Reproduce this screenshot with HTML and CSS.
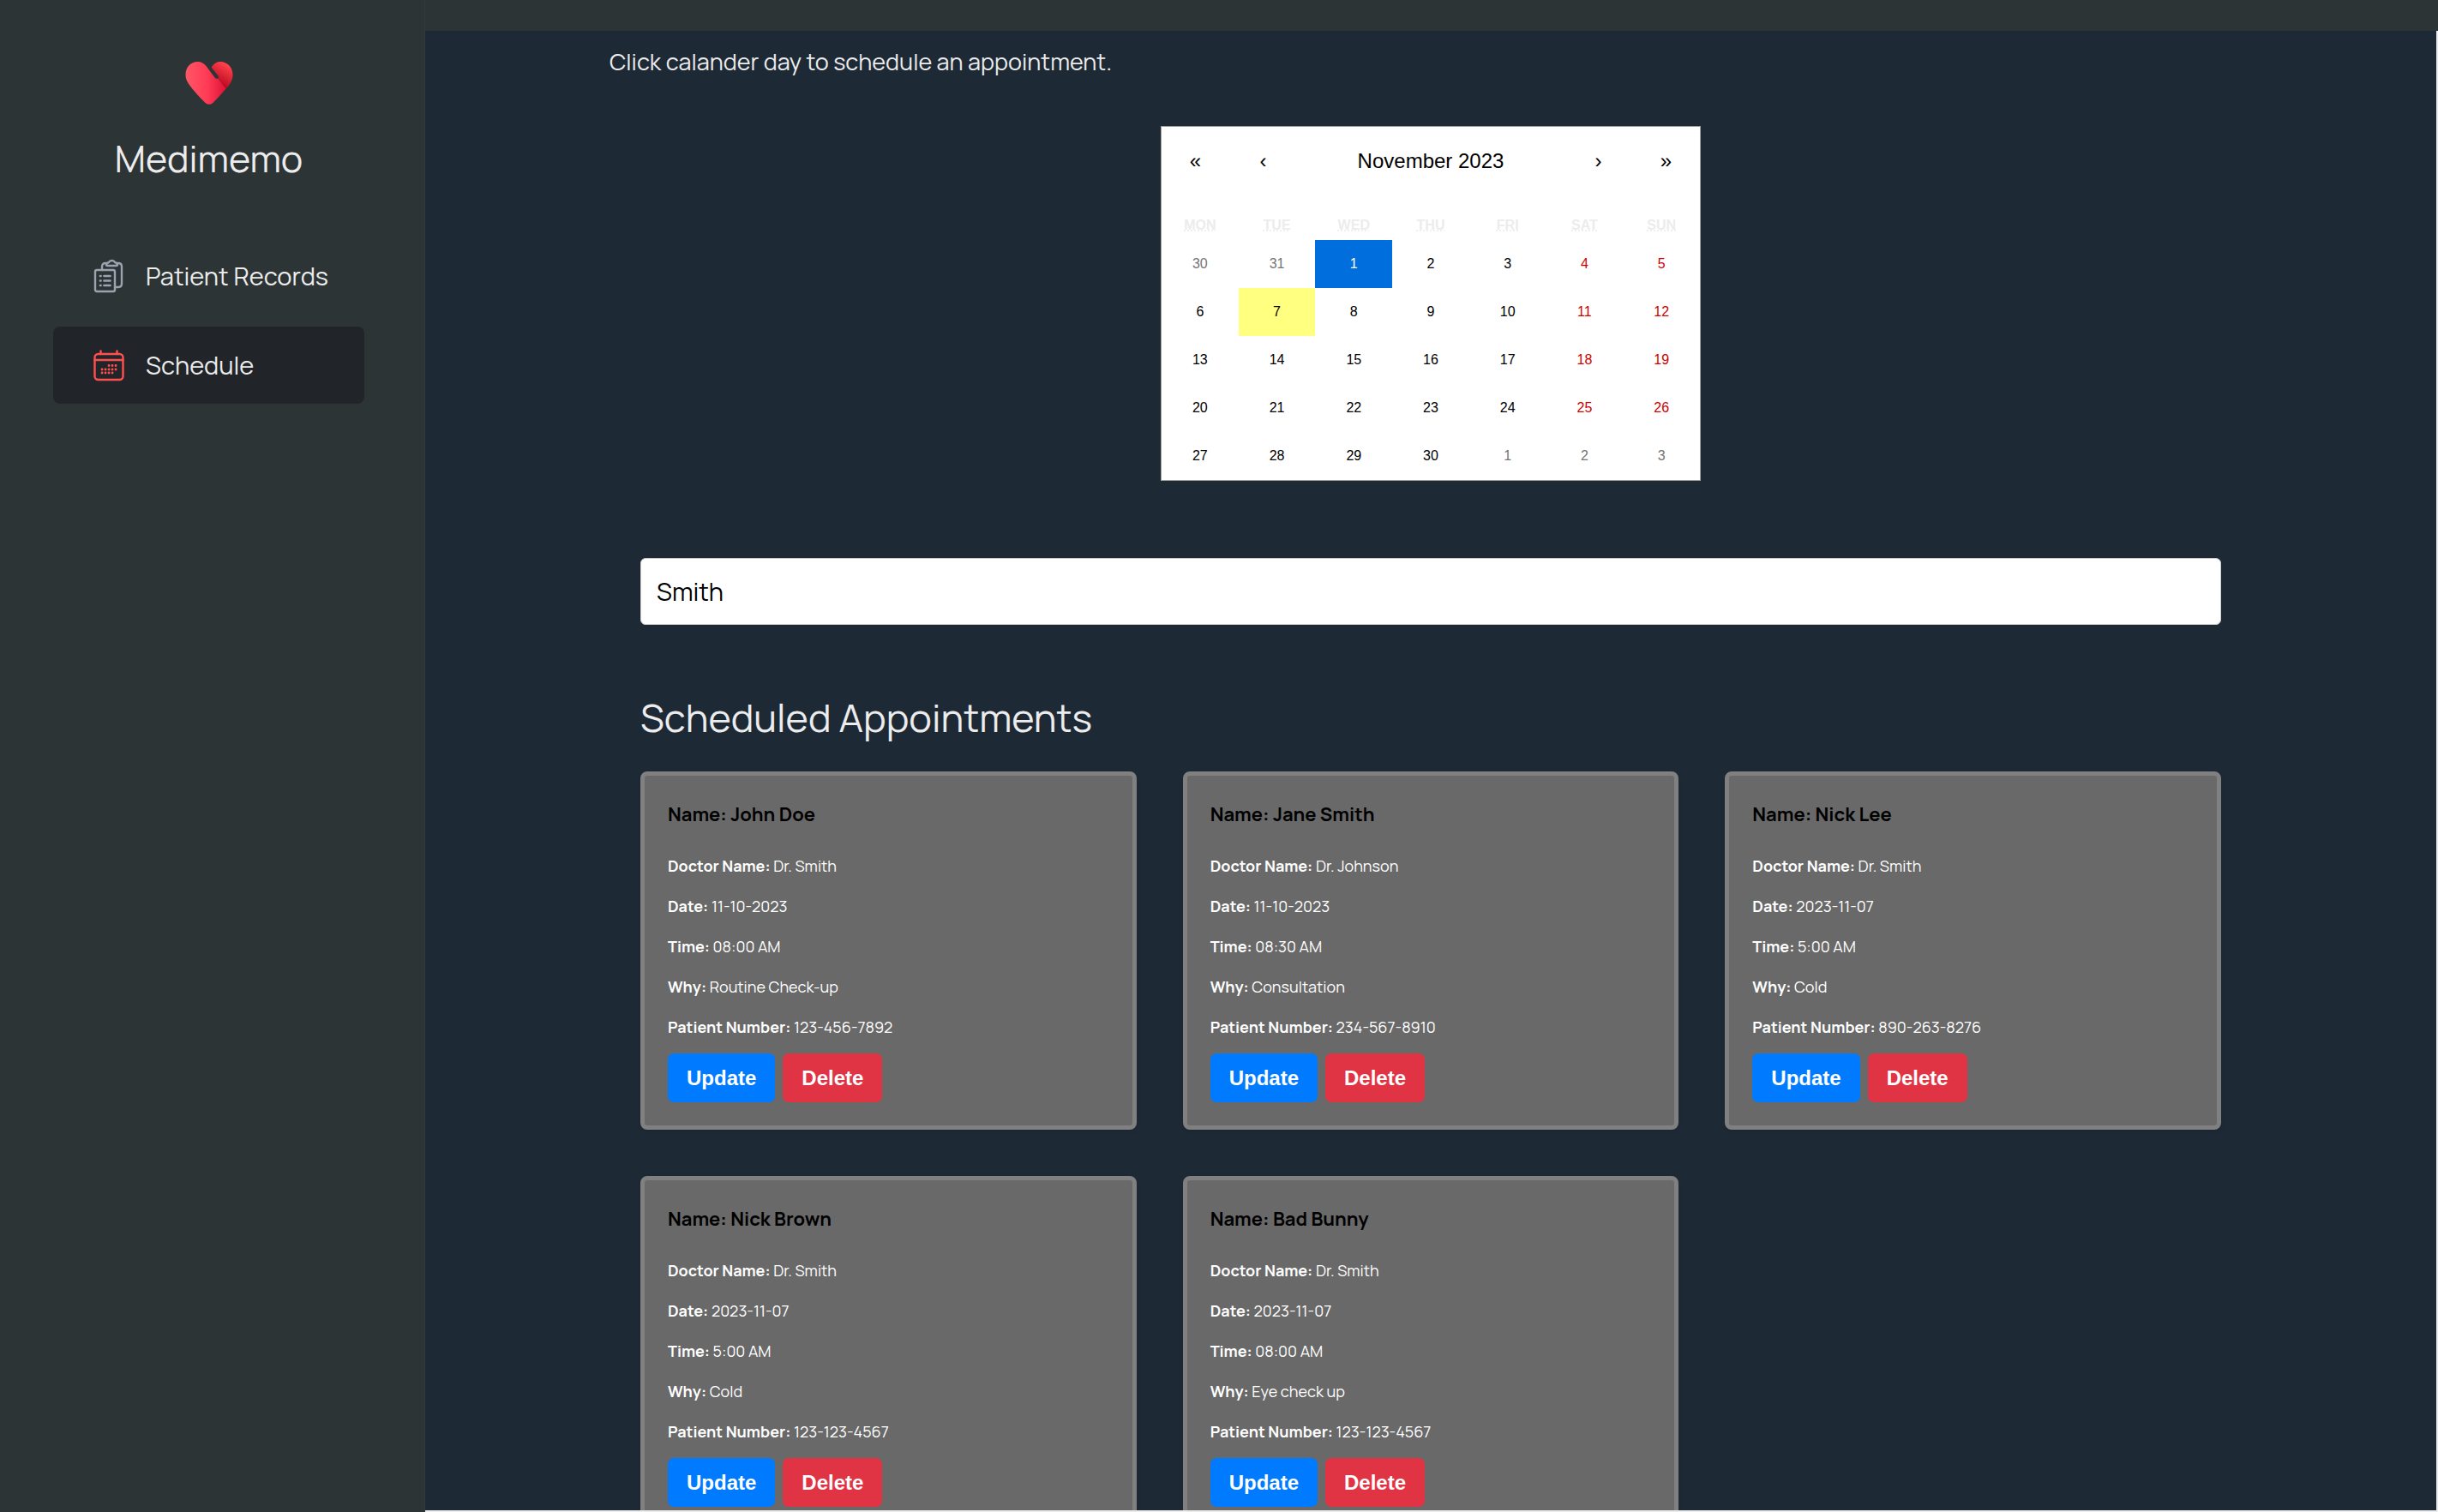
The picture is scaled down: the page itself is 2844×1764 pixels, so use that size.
FILE: index.html
```html
<!DOCTYPE html>
<html lang="en">
<head>
<meta charset="utf-8">
<title>Medimemo</title>
<meta name="viewport" content="width=device-width, initial-scale=1">
<link rel="stylesheet" href="styles.css">
</head>
<body>
<div class="app">
  <aside class="sidebar">
    <svg class="logo" viewBox="0 0 56 52" aria-hidden="true">
      <defs>
        <linearGradient id="heart-front" x1="0" y1="0" x2="1" y2="0">
          <stop offset="0" stop-color="#ff5668"/>
          <stop offset="0.55" stop-color="#ff3a54"/>
          <stop offset="1" stop-color="#dc1437"/>
        </linearGradient>
        <linearGradient id="heart-back" x1="0.7" y1="0.1" x2="0.35" y2="0.85">
          <stop offset="0" stop-color="#ff414b"/>
          <stop offset="1" stop-color="#b5061f"/>
        </linearGradient>
      </defs>
      <path fill="url(#heart-back)" d="M30.500 7.500C33.500 3 37.500 1 41 1C49 1 55.500 7.500 55.500 16C55.500 22.500 52 28 47.500 33L36 21C38 21.500 40 19.500 38.500 17.500Z"/>
      <path fill="url(#heart-front)" d="M14.500 1C19 1 22 3 24.500 6L34.500 19.500C35.500 21 37 21 38 20.500L47.500 32.500C42.500 38.500 37 44.500 33 48.500C30 51.500 26 51.500 23 48.500C16 41.500 9 34 4.500 27.500C2 24 0.500 20.500 0.500 16C0.500 7.500 6.500 1 14.500 1Z"/>
    </svg>
    <h1 class="brand">Medimemo</h1>
    <nav class="menu">
      <a class="menu-item" href="#records">
        <svg class="menu-icon" viewBox="0 0 36 40" fill="none" stroke="#9ca3af" stroke-width="2.400" stroke-linecap="round" stroke-linejoin="round" aria-hidden="true">
          <rect x="2" y="13" width="23" height="25" rx="2"/>
          <path d="M10 13V9Q10 5 14 5H15M28 5H29Q33 5 33 9V29Q33 33 29 33H25"/>
          <path d="M15 7Q15 5 18 4Q19 2 21.500 2Q24 2 25 4Q28 5 28 7Q28 8 26 8H17Q15 8 15 7Z"/>
          <path d="M8 20H8.500M12.500 20H19.500M8 25.500H8.500M12.500 25.500H19.500M8 31H8.500M12.500 31H19.500" stroke-width="2.700"/>
        </svg>
        Patient Records
      </a>
      <a class="menu-item active" href="#schedule">
        <svg class="menu-icon" viewBox="0 0 36 40" fill="none" stroke="#ff5050" stroke-width="2.400" stroke-linecap="round" aria-hidden="true">
          <rect x="1.500" y="7" width="33" height="30" rx="4"/>
          <path d="M1.500 14H34.500M8.500 3.500V7M27.500 3.500V7"/>
          <path d="M18 20.500H18.100M22 20.500H22.100M26 20.500H26.100M10 25H10.100M14 25H14.100M18 25H18.100M22 25H22.100M26 25H26.100M10 29H10.100M14 29H14.100M18 29H18.100M22 29H22.100" stroke-width="2.800"/>
        </svg>
        Schedule
      </a>
    </nav>
  </aside>

  <main class="main">
    <div class="content">
      <p class="intro">Click calander day to schedule an appointment.</p>

      <section class="calendar" aria-label="Calendar">
        <div class="cal-nav">
          <button type="button" aria-label="Previous year">«</button>
          <button type="button" aria-label="Previous month">‹</button>
          <button type="button" class="cal-title">November 2023</button>
          <button type="button" aria-label="Next month">›</button>
          <button type="button" aria-label="Next year">»</button>
        </div>
        <div class="weekdays">
          <abbr title="Monday">MON</abbr><abbr title="Tuesday">TUE</abbr><abbr title="Wednesday">WED</abbr><abbr title="Thursday">THU</abbr><abbr title="Friday">FRI</abbr><abbr title="Saturday">SAT</abbr><abbr title="Sunday">SUN</abbr>
        </div>
        <div class="days">
          <button type="button" class="other">30</button><button type="button" class="other">31</button><button type="button" class="selected">1</button><button type="button">2</button><button type="button">3</button><button type="button" class="weekend">4</button><button type="button" class="weekend">5</button>
          <button type="button">6</button><button type="button" class="today">7</button><button type="button">8</button><button type="button">9</button><button type="button">10</button><button type="button" class="weekend">11</button><button type="button" class="weekend">12</button>
          <button type="button">13</button><button type="button">14</button><button type="button">15</button><button type="button">16</button><button type="button">17</button><button type="button" class="weekend">18</button><button type="button" class="weekend">19</button>
          <button type="button">20</button><button type="button">21</button><button type="button">22</button><button type="button">23</button><button type="button">24</button><button type="button" class="weekend">25</button><button type="button" class="weekend">26</button>
          <button type="button">27</button><button type="button">28</button><button type="button">29</button><button type="button">30</button><button type="button" class="other">1</button><button type="button" class="other">2</button><button type="button" class="other">3</button>
        </div>
      </section>

      <section class="appointments">
        <input class="search" type="text" value="Smith" aria-label="Search appointments">
        <h2 class="heading">Scheduled Appointments</h2>
        <div class="cards">
          <article class="card">
            <h3>Name: John Doe</h3>
            <div class="details">
              <p><strong>Doctor Name:</strong> Dr. Smith</p>
              <p><strong>Date:</strong> 11-10-2023</p>
              <p><strong>Time:</strong> 08:00 AM</p>
              <p><strong>Why:</strong> Routine Check-up</p>
              <p><strong>Patient Number:</strong> 123-456-7892</p>
            </div>
            <div class="actions"><button type="button" class="update">Update</button><button type="button" class="delete">Delete</button></div>
          </article>
          <article class="card">
            <h3>Name: Jane Smith</h3>
            <div class="details">
              <p><strong>Doctor Name:</strong> Dr. Johnson</p>
              <p><strong>Date:</strong> 11-10-2023</p>
              <p><strong>Time:</strong> 08:30 AM</p>
              <p><strong>Why:</strong> Consultation</p>
              <p><strong>Patient Number:</strong> 234-567-8910</p>
            </div>
            <div class="actions"><button type="button" class="update">Update</button><button type="button" class="delete">Delete</button></div>
          </article>
          <article class="card">
            <h3>Name: Nick Lee</h3>
            <div class="details">
              <p><strong>Doctor Name:</strong> Dr. Smith</p>
              <p><strong>Date:</strong> 2023-11-07</p>
              <p><strong>Time:</strong> 5:00 AM</p>
              <p><strong>Why:</strong> Cold</p>
              <p><strong>Patient Number:</strong> 890-263-8276</p>
            </div>
            <div class="actions"><button type="button" class="update">Update</button><button type="button" class="delete">Delete</button></div>
          </article>
          <article class="card">
            <h3>Name: Nick Brown</h3>
            <div class="details">
              <p><strong>Doctor Name:</strong> Dr. Smith</p>
              <p><strong>Date:</strong> 2023-11-07</p>
              <p><strong>Time:</strong> 5:00 AM</p>
              <p><strong>Why:</strong> Cold</p>
              <p><strong>Patient Number:</strong> 123-123-4567</p>
            </div>
            <div class="actions"><button type="button" class="update">Update</button><button type="button" class="delete">Delete</button></div>
          </article>
          <article class="card">
            <h3>Name: Bad Bunny</h3>
            <div class="details">
              <p><strong>Doctor Name:</strong> Dr. Smith</p>
              <p><strong>Date:</strong> 2023-11-07</p>
              <p><strong>Time:</strong> 08:00 AM</p>
              <p><strong>Why:</strong> Eye check up</p>
              <p><strong>Patient Number:</strong> 123-123-4567</p>
            </div>
            <div class="actions"><button type="button" class="update">Update</button><button type="button" class="delete">Delete</button></div>
          </article>
        </div>
      </section>
    </div>
  </main>
</div>
</body>
</html>
```
FILE: styles.css
```css
* {
  box-sizing: border-box;
}

body,
h1,
h2,
h3,
p {
  margin: 0;
}

body {
  background: #2d3436;
  color: #ececec;
  font-family: Manrope, Inter, sans-serif;
}

button {
  border: 0;
  padding: 0;
  font-family: Arial, "Liberation Sans", sans-serif;
  cursor: pointer;
}

.app {
  display: flex;
  height: 100vh;
}

.sidebar {
  flex: none;
  display: flex;
  flex-direction: column;
  align-items: center;
  width: 496px;
  padding: 71px 70px 0 62px;
  border-right: 1px solid #33393b;
}

.logo {
  width: 56px;
  height: 52px;
}

.brand {
  margin-top: 34px;
  font-size: 43px;
  font-weight: 400;
  line-height: 56px;
}

.menu {
  display: flex;
  flex-direction: column;
  gap: 14px;
  align-self: stretch;
  margin-top: 64px;
}

.menu-item {
  display: flex;
  align-items: center;
  gap: 25px;
  height: 90px;
  padding: 0 47px;
  border-radius: 8px;
  color: inherit;
  font-size: 29px;
  text-decoration: none;
  white-space: nowrap;
}

.menu-item.active {
  background: #212529;
}

.menu-icon {
  flex: none;
  width: 36px;
  height: 40px;
}

.main {
  flex: 1;
  min-width: 0;
  margin-top: 36px;
  overflow: hidden;
  border: solid #ececec;
  border-width: 0 2px 2px 0;
  background: #1e2936;
}

.content {
  max-width: 1916px;
  margin: 0 auto;
  padding-top: 16px;
}

.intro {
  font-size: 27px;
  line-height: 40px;
}

.calendar {
  width: 630px;
  margin: 55px auto 0;
  border: 1px solid #a0a096;
  background: #fff;
  font-family: Arial, "Liberation Sans", sans-serif;
}

.calendar button {
  background: none;
  color: #000;
}

.cal-nav {
  display: grid;
  grid-template-columns: 79px 79px 1fr 79px 79px;
  height: 80px;
  margin-bottom: 18px;
}

.cal-nav button {
  font-size: 24px;
}

.weekdays,
.days {
  display: grid;
  grid-template-columns: repeat(7, 1fr);
}

.weekdays {
  justify-items: center;
  padding: 8px 0;
  font-size: 16px;
  font-weight: 700;
  line-height: 18px;
}

.days {
  grid-auto-rows: 56px;
}

.days button {
  font-size: 16px;
}

.calendar .other {
  color: #757575;
}

.calendar .weekend {
  color: #d10000;
}

.calendar .selected {
  background: #006edc;
  color: #fff;
}

.calendar .today {
  background: #ffff80;
}

.appointments {
  padding: 90px 36px 54px;
}

.search {
  display: block;
  width: 100%;
  height: 78px;
  padding: 0 18px;
  border: 1px solid #ccc;
  border-radius: 6px;
  background: #fff;
  color: #000;
  font-family: inherit;
  font-size: 29px;
}

.heading {
  margin: 80px 0 35px;
  font-size: 45px;
  font-weight: 400;
  line-height: 56px;
}

.cards {
  display: grid;
  grid-template-columns: repeat(3, 1fr);
  gap: 54px;
}

.card {
  padding: 29px 27px 27px;
  border: 5px solid #808080;
  border-radius: 8px;
  background: #696969;
  box-shadow: 0 2px 4px rgba(0, 0, 0, 0.1);
  color: #fff;
}

.card h3 {
  color: #000;
  font-size: 22px;
  font-weight: 700;
  line-height: 32px;
}

.details {
  display: flex;
  flex-direction: column;
  gap: 20px;
  margin: 31px 0 17px;
  font-size: 18px;
  line-height: 27px;
}

.actions {
  display: flex;
  gap: 9px;
}

.actions button {
  height: 57px;
  padding: 0 22px;
  border-radius: 7px;
  color: #fff;
  font-size: 24px;
  font-weight: 700;
}

.update {
  background: #007bff;
}

.delete {
  background: #e03444;
}
```
